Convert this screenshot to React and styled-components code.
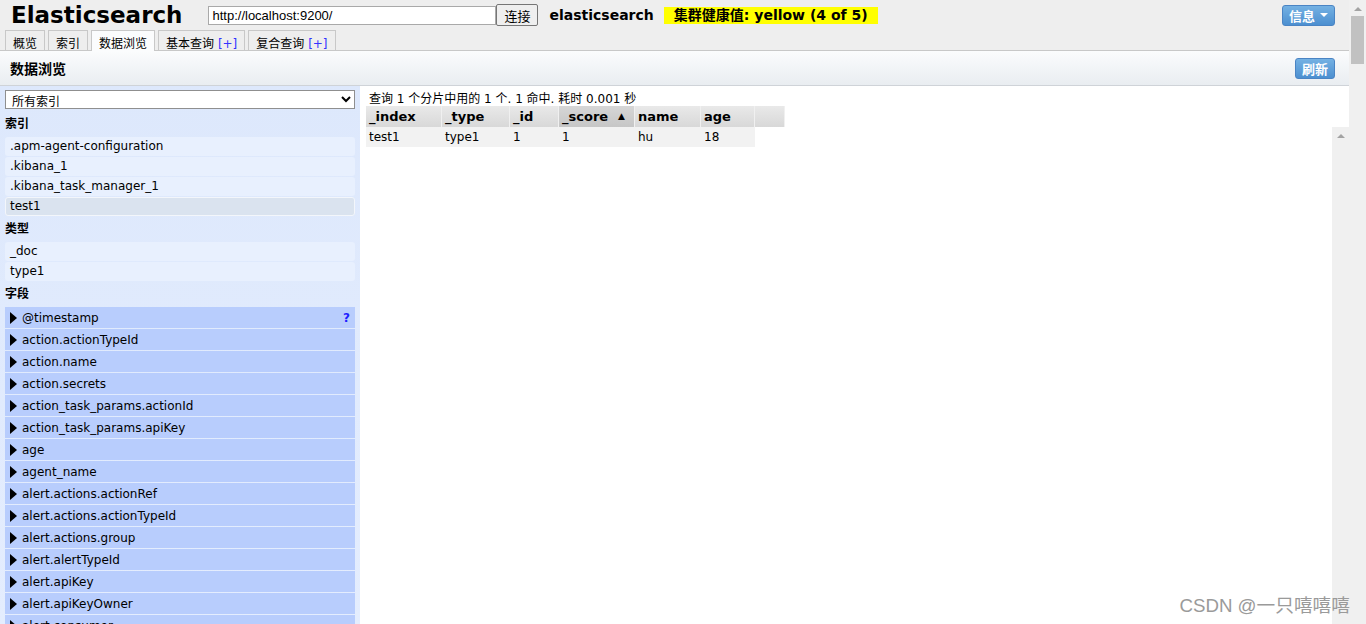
import * as React from "react"
import styled, { createGlobalStyle } from "styled-components"

const GlobalStyle = createGlobalStyle`
  html, body {
    margin: 0;
    height: 100%;
    overflow: hidden;
  }
  body {
    font-family: "DejaVu Sans", "Noto Sans CJK SC", sans-serif;
    font-size: 12px;
    color: #000;
    background: #fff;
  }
  #root {
    height: 100%;
  }
`

const indices = [".apm-agent-configuration", ".kibana_1", ".kibana_task_manager_1", "test1"]
const types = ["_doc", "type1"]
const fields = [
  "@timestamp",
  "action.actionTypeId",
  "action.name",
  "action.secrets",
  "action_task_params.actionId",
  "action_task_params.apiKey",
  "age",
  "agent_name",
  "alert.actions.actionRef",
  "alert.actions.actionTypeId",
  "alert.actions.group",
  "alert.alertTypeId",
  "alert.apiKey",
  "alert.apiKeyOwner",
  "alert.consumer",
  "alert.createdAt",
]

const columns = [
  { name: "_index", width: 76 },
  { name: "_type", width: 68 },
  { name: "_id", width: 49 },
  { name: "_score", width: 76, sorted: true },
  { name: "name", width: 66 },
  { name: "age", width: 54 },
  { name: "", width: 30 },
]
const rows = [["test1", "type1", "1", "1", "hu", "18"]]

const App = () => {
  return (
    <>
      <GlobalStyle />
      <Page>
        <Main>
          <Header>
            <TopRow>
              <Logo>Elasticsearch</Logo>
              <UrlInput defaultValue="http://localhost:9200/" />
              <ConnectButton>连接</ConnectButton>
              <ClusterName>elasticsearch</ClusterName>
              <Health>集群健康值: yellow (4 of 5)</Health>
              <BlueButton $right={14}>
                信息 <Caret />
              </BlueButton>
            </TopRow>
            <Tabs>
              <Tab>概览</Tab>
              <Tab>索引</Tab>
              <Tab $active>数据浏览</Tab>
              <Tab>
                基本查询 <Plus>[+]</Plus>
              </Tab>
              <Tab>
                复合查询 <Plus>[+]</Plus>
              </Tab>
            </Tabs>
          </Header>

          <Toolbar>
            <ToolbarTitle>数据浏览</ToolbarTitle>
            <BlueButton $right={14}>刷新</BlueButton>
          </Toolbar>

          <Content>
            <Sidebar>
              <Select>
                <option>所有索引</option>
              </Select>
              <SectionTitle $first>索引</SectionTitle>
              {indices.map(i => (
                <ListItem key={i} $selected={i === "test1"}>
                  {i}
                </ListItem>
              ))}
              <SectionTitle>类型</SectionTitle>
              {types.map(t => (
                <ListItem key={t}>{t}</ListItem>
              ))}
              <SectionTitle>字段</SectionTitle>
              {fields.map((f, n) => (
                <FieldRow key={f}>
                  <Arrow />
                  <FieldName>{f}</FieldName>
                  {n === 0 && <Help>?</Help>}
                </FieldRow>
              ))}
            </Sidebar>

            <Results>
              <Summary>查询 1 个分片中用的 1 个. 1 命中. 耗时 0.001 秒</Summary>
              <HeadRow>
                {columns.map((c, n) => (
                  <HeadCell key={n} $w={c.width} $sorted={c.sorted}>
                    {c.name}
                    {c.sorted && <SortMark>▲</SortMark>}
                  </HeadCell>
                ))}
              </HeadRow>
              <BodyArea>
                <Rows>
                  {rows.map((r, n) => (
                    <Row key={n}>
                      {r.map((v, k) => (
                        <Cell key={k} $w={columns[k].width}>
                          {v}
                        </Cell>
                      ))}
                    </Row>
                  ))}
                </Rows>
                <InnerScroll>
                  <ScrollArrow />
                </InnerScroll>
              </BodyArea>
            </Results>
          </Content>
        </Main>

        <PageScroll>
          <ScrollArrow />
          <Thumb />
        </PageScroll>

        <Watermark>CSDN @一只嘻嘻嘻</Watermark>
      </Page>
    </>
  )
}

const Page = styled.div`
  position: relative;
  display: flex;
  height: 100%;
  overflow: hidden;
`

const Main = styled.div`
  flex: 1;
  display: flex;
  flex-direction: column;
  min-width: 0;
`

const Header = styled.div`
  background: #eeeeee;
  border-bottom: 1px solid #c8c8c8;
  height: 51px;
  box-sizing: border-box;
  display: flex;
  flex-direction: column;
`

const TopRow = styled.div`
  display: flex;
  align-items: center;
  height: 30px;
  padding: 0 0 0 11px;
`

const Logo = styled.h1`
  margin: 0;
  font-size: 23px;
  font-weight: bold;
  line-height: 28px;
  color: #000;
`

const UrlInput = styled.input`
  margin-left: 26px;
  width: 288px;
  height: 19px;
  box-sizing: border-box;
  border: 1px solid #a9a9a9;
  padding: 0 3px;
  font-family: "Liberation Sans", sans-serif;
  font-size: 13px;
  background: #fff;
`

const ConnectButton = styled.button`
  height: 22px;
  width: 42px;
  padding: 0;
  border: 1px solid #767676;
  border-radius: 2px;
  background: #efefef;
  font-family: "Noto Sans CJK SC", sans-serif;
  font-size: 13px;
  color: #000;
`

const ClusterName = styled.span`
  margin-left: 11px;
  font-size: 14px;
  font-weight: bold;
`

const Health = styled.span`
  margin-left: 10px;
  background: #ffff00;
  padding: 0 10px;
  height: 17px;
  line-height: 17px;
  font-size: 14px;
  font-weight: bold;
`

const BlueButton = styled.button`
  margin-left: auto;
  margin-right: ${p => p.$right}px;
  height: 21px;
  padding: 0 6px;
  border: 1px solid #4a84c4;
  border-radius: 3px;
  background: linear-gradient(#74b1e3, #4c8fd0);
  color: #fff;
  font-family: "Noto Sans CJK SC", sans-serif;
  font-size: 13px;
  font-weight: bold;
  display: flex;
  align-items: center;
  gap: 5px;
`

const Caret = styled.span`
  width: 0;
  height: 0;
  border-left: 4px solid transparent;
  border-right: 4px solid transparent;
  border-top: 4px solid #fff;
`

const Tabs = styled.div`
  display: flex;
  align-items: flex-end;
  gap: 3px;
  padding-left: 5px;
  margin-top: auto;
  margin-bottom: -1px;
`

const Tab = styled.div`
  height: 21px;
  box-sizing: border-box;
  padding: 5px 7px 0;
  line-height: 16px;
  border: 1px solid #c8c8c8;
  border-bottom: ${p => (p.$active ? "none" : "1px solid #c8c8c8")};
  background: ${p => (p.$active ? "#fbfcfd" : "#eeeeee")};
  font-size: 12px;
  white-space: nowrap;
`

const Plus = styled.span`
  color: #3333ff;
`

const Toolbar = styled.div`
  height: 35px;
  box-sizing: border-box;
  border-bottom: 1px solid #cfd3d8;
  background: linear-gradient(#fbfcfd, #e9edf1);
  display: flex;
  align-items: center;
  padding-left: 10px;
`

const ToolbarTitle = styled.div`
  font-size: 14px;
  font-weight: bold;
`

const Content = styled.div`
  flex: 1;
  display: flex;
  min-height: 0;
`

const Sidebar = styled.div`
  width: 360px;
  box-sizing: border-box;
  padding: 4px 5px 0;
  background: linear-gradient(#dde8fc, #e4edfe);
  overflow: hidden;
  flex-shrink: 0;
`

const Select = styled.select`
  width: 350px;
  height: 19px;
  display: block;
  border: 1px solid #8f8f8f;
  border-radius: 0;
  background: #fff;
  font-family: "Noto Sans CJK SC", sans-serif;
  font-size: 12px;
  padding: 0 2px;
`

const SectionTitle = styled.div`
  font-weight: bold;
  line-height: 16px;
  padding: ${p => (p.$first ? 7 : 4)}px 0 5px;
`

const ListItem = styled.div`
  height: 19px;
  line-height: ${p => (p.$selected ? 17 : 19)}px;
  box-sizing: border-box;
  margin-bottom: 1px;
  padding-left: ${p => (p.$selected ? 4 : 5)}px;
  border-radius: 3px;
  background: ${p => (p.$selected ? "#dae3ef" : "#e8f0fe")};
  border: ${p => (p.$selected ? "1px solid #f3f6fb" : "none")};
  white-space: nowrap;
`

const FieldRow = styled.div`
  height: 21px;
  margin-bottom: 1px;
  background: #b8cdfd;
  display: flex;
  align-items: center;
  padding: 0 5px;
`

const Arrow = styled.span`
  width: 0;
  height: 0;
  border-top: 6px solid transparent;
  border-bottom: 6px solid transparent;
  border-left: 7px solid #000;
`

const FieldName = styled.span`
  margin-left: 5px;
  flex: 1;
  white-space: nowrap;
`

const Help = styled.span`
  color: #2020ff;
  font-weight: bold;
`

const Results = styled.div`
  flex: 1;
  display: flex;
  flex-direction: column;
  min-width: 0;
`

const Summary = styled.div`
  line-height: 16px;
  padding: 5px 0 0 9px;
  height: 20px;
  box-sizing: border-box;
`

const HeadRow = styled.div`
  display: flex;
  margin-left: 6px;
  height: 21px;
`

const HeadCell = styled.div`
  width: ${p => p.$w}px;
  box-sizing: border-box;
  border-right: 1px solid #f0f0f0;
  background: ${p =>
    p.$sorted ? "linear-gradient(#d6d6d6, #c6c6c6)" : "linear-gradient(#e9e9e9, #d8d8d8)"};
  font-weight: bold;
  font-size: 13px;
  line-height: 21px;
  padding-left: 3px;
  display: flex;
  align-items: center;
  justify-content: space-between;
  padding-right: 9px;
`

const SortMark = styled.span`
  font-size: 9px;
`

const BodyArea = styled.div`
  flex: 1;
  display: flex;
  min-height: 0;
`

const Rows = styled.div`
  flex: 1;
  padding-left: 6px;
`

const Row = styled.div`
  display: inline-flex;
  height: 20px;
  background: #f2f2f2;
`

const Cell = styled.div`
  width: ${p => p.$w}px;
  box-sizing: border-box;
  padding-left: 3px;
  line-height: 20px;
`

const InnerScroll = styled.div`
  width: 17px;
  background: #f0f0f0;
  flex-shrink: 0;
`

const PageScroll = styled.div`
  width: 17px;
  background: #f0f0f0;
  flex-shrink: 0;
`

const ScrollArrow = styled.div`
  width: 0;
  height: 0;
  margin: 7px auto 0;
  border-left: 4px solid transparent;
  border-right: 4px solid transparent;
  border-bottom: 4px solid #a3a3a3;
`

const Thumb = styled.div`
  margin: 5px 2px 0;
  height: 48px;
  background: #c1c1c1;
`

const Watermark = styled.div`
  position: absolute;
  right: 16px;
  bottom: 7px;
  font-family: "Liberation Sans", "Noto Sans CJK SC", sans-serif;
  font-size: 18.7px;
  color: #9a9a9a;
`

export default App
